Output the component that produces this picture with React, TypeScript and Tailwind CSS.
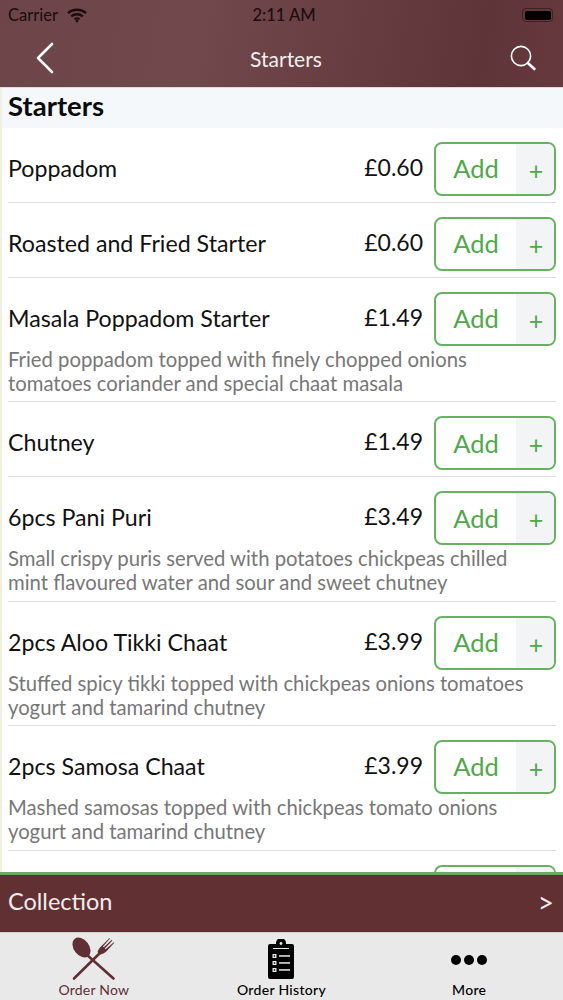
import React from "react";

const items = [
  { name: "Poppadom", price: "£0.60" },
  { name: "Roasted and Fried Starter", price: "£0.60" },
  { name: "Masala Poppadom Starter", price: "£1.49", desc: ["Fried poppadom topped with finely chopped onions", "tomatoes coriander and special chaat masala"] },
  { name: "Chutney", price: "£1.49" },
  { name: "6pcs Pani Puri", price: "£3.49", desc: ["Small crispy puris served with potatoes chickpeas chilled", "mint flavoured water and sour and sweet chutney"] },
  { name: "2pcs Aloo Tikki Chaat", price: "£3.99", desc: ["Stuffed spicy tikki topped with chickpeas onions tomatoes", "yogurt and tamarind chutney"] },
  { name: "2pcs Samosa Chaat", price: "£3.99", desc: ["Mashed samosas topped with chickpeas tomato onions", "yogurt and tamarind chutney"] },
];

function AddButton({ empty }: { empty?: boolean }) {
  return (
    <div className="flex h-[54px] w-[122px] shrink-0 overflow-hidden rounded-[8px] border-2 border-[#67b262] bg-white text-[#4fa84a]">
      <div className="flex flex-1 items-center justify-center text-[25.5px] leading-none">{empty ? "" : "Add"}</div>
      <div className="flex w-[38px] items-center justify-center bg-[#f2f4f6] pt-[3px] pl-[2px] text-[25px] leading-none">{empty ? "" : "+"}</div>
    </div>
  );
}

function Row({ name, price, desc }: { name: string; price: string; desc?: string[] }) {
  return (
    <div className="border-b border-[#dedede] pt-[14px] pb-[6px]">
      <div className="flex items-start">
        <div className="flex-1 pt-[13px] text-[23.2px] leading-[27px] text-[#111]">{name}</div>
        <div className="pt-[12px] pr-[11px] text-[23px] leading-[27px] text-[#111]">{price}</div>
        <AddButton />
      </div>
      {desc && (
        <div className="pt-[2px] text-[20.3px] leading-[23.7px] text-[#777]">
          {desc.map((d) => (
            <div key={d} className="whitespace-nowrap">{d}</div>
          ))}
        </div>
      )}
    </div>
  );
}

function Wifi() {
  return (
    <svg width="20" height="15" viewBox="0 0 20 15" fill="none" stroke="#1a0d0d" strokeWidth="2.4">
      <path d="M1 5.2C6 .6 14 .6 19 5.2" />
      <path d="M4.2 8.4c3.3-2.8 8.3-2.8 11.6 0" />
      <path d="M7.4 11.2c1.5-1 3.7-1 5.2 0" strokeWidth="2" />
      <circle cx="10" cy="13" r="1.4" fill="#1a0d0d" stroke="none" />
    </svg>
  );
}

function Cutlery() {
  return (
    <svg width="46" height="46" viewBox="0 0 46 46" fill="#5f2f33" stroke="none">
      <ellipse cx="10.5" cy="10.5" rx="7.6" ry="11" transform="rotate(-38 10.5 10.5)" />
      <path d="M15 17 42.5 41.5" stroke="#5f2f33" strokeWidth="2.6" strokeLinecap="round" />
      <path d="M31 14 3 41.5" stroke="#5f2f33" strokeWidth="2.6" strokeLinecap="round" />
      <path d="M26.5 15c1-3 2-4 4-6l8-8 .5.5-7 8 .8.8 8-7.5.6.6-7.6 8 .8.8 8.2-7 .5.5-7.5 8.2c-2 2-3.5 3-7 3.5z" />
    </svg>
  );
}

function Clipboard() {
  return (
    <svg width="26" height="40" viewBox="0 0 26 40">
      <path fill="#000" d="M2 5h6V4a5 5 0 0 1 10 0v1h6a2 2 0 0 1 2 2v31a2 2 0 0 1-2 2H2a2 2 0 0 1-2-2V7a2 2 0 0 1 2-2z" />
      <circle cx="13" cy="4.5" r="1.4" fill="#e9e9ea" />
      <path d="M5 9.5h16" stroke="#e9e9ea" strokeWidth="1" />
      <g fill="#e9e9ea">
        <rect x="4.5" y="15" width="4" height="4" />
        <rect x="4.5" y="22" width="4" height="4" />
        <rect x="4.5" y="29" width="4" height="4" />
        <rect x="11" y="16.2" width="11" height="1.5" />
        <rect x="11" y="23.2" width="11" height="1.5" />
        <rect x="11" y="30.2" width="11" height="1.5" />
      </g>
      <g fill="#000">
        <rect x="5.8" y="16.3" width="1.4" height="1.4" />
        <rect x="5.8" y="23.3" width="1.4" height="1.4" />
        <rect x="5.8" y="30.3" width="1.4" height="1.4" />
      </g>
    </svg>
  );
}

export default function App() {
  return (
    <div className="flex h-[1000px] w-[563px] flex-col overflow-hidden bg-white font-['Lato','Noto_Sans',sans-serif]">
      <header className="h-[88px] shrink-0 border-b border-[#ddd] bg-[linear-gradient(100deg,#6d4448_0%,#71484c_35%,#5f3438_85%,#65393d_100%)]">
        <div className="flex h-[29px] items-center pr-[10px] pl-[8px] pt-[1px]">
          <div className="flex flex-1 items-center gap-[9px] text-[16.5px] text-[#1a0d0d]">
            <span>Carrier</span>
            <Wifi />
          </div>
          <div className="pl-[7px] text-[16.5px] font-medium text-[#1a0d0d]">2:11 AM</div>
          <div className="flex flex-1 justify-end">
            <div className="h-[14px] w-[31px] rounded-[4px] border border-[#3d2225] p-[1.5px]">
              <div className="h-full w-full rounded-[2px] bg-black" />
            </div>
          </div>
        </div>
        <div className="flex h-[58px] items-center pr-[27px] pl-[36px] text-white">
          <div className="flex-1">
            <svg width="18" height="32" viewBox="0 0 18 32" fill="none" stroke="#fff" strokeWidth="2.6" strokeLinecap="round" strokeLinejoin="round">
              <path d="M16 2 2 16l14 14" />
            </svg>
          </div>
          <div className="text-[21px] leading-none text-[#f4eeee]">Starters</div>
          <div className="flex flex-1 justify-end">
            <svg width="26" height="26" viewBox="0 0 26 26" fill="none" stroke="#fff" strokeWidth="1.6" strokeLinecap="round">
              <circle cx="11" cy="11" r="9.6" />
              <path d="m17.8 18 6.6 6" strokeWidth="2.6" />
            </svg>
          </div>
        </div>
      </header>

      <main className="min-h-0 flex-1 overflow-hidden border-l-2 border-[#f0efe0]">
        <div className="flex h-[40px] items-center bg-[#f5f8fa] pl-[6px] pb-[5px] text-[27.5px] font-bold leading-none text-[#0b0b0b]">Starters</div>
        <div className="pr-[7px] pl-[6px]">
          {items.map((it) => (
            <Row key={it.name} {...it} />
          ))}
          <div className="pt-[14px]">
            <div className="ml-auto w-[122px]">
              <AddButton empty />
            </div>
          </div>
        </div>
      </main>

      <div className="flex h-[60px] shrink-0 items-center justify-between border-t-[3px] border-[#6fa75f] bg-[#613033] pr-[9px] pl-[8px] pb-[3px] text-white">
        <span className="text-[23.5px] leading-none text-[#f3ecec]">Collection</span>
        <span className="text-[28px] leading-none text-[#f3ecec]">&gt;</span>
      </div>

      <nav className="grid h-[68px] shrink-0 grid-cols-3 border-t border-[#cfcfcf] bg-[#e9e9ea]">
        <div className="flex flex-col items-center pt-[4px]">
          <div className="h-[44px]"><Cutlery /></div>
          <span className="pt-[1px] text-[14px] leading-[16px] tracking-[0.2px] text-[#5f2f33]">Order Now</span>
        </div>
        <div className="flex flex-col items-center pt-[6px]">
          <div className="h-[42px]"><Clipboard /></div>
          <span className="pt-[1px] text-[14px] font-medium leading-[16px] tracking-[0.3px] text-black">Order History</span>
        </div>
        <div className="flex flex-col items-center pt-[22px]">
          <div className="flex h-[26px] gap-[3px]">
            <span className="h-[10px] w-[10px] rounded-full bg-black" />
            <span className="h-[10px] w-[10px] rounded-full bg-black" />
            <span className="h-[10px] w-[10px] rounded-full bg-black" />
          </div>
          <span className="pt-[1px] text-[14px] font-medium leading-[16px] tracking-[0.3px] text-black">More</span>
        </div>
      </nav>
    </div>
  );
}
